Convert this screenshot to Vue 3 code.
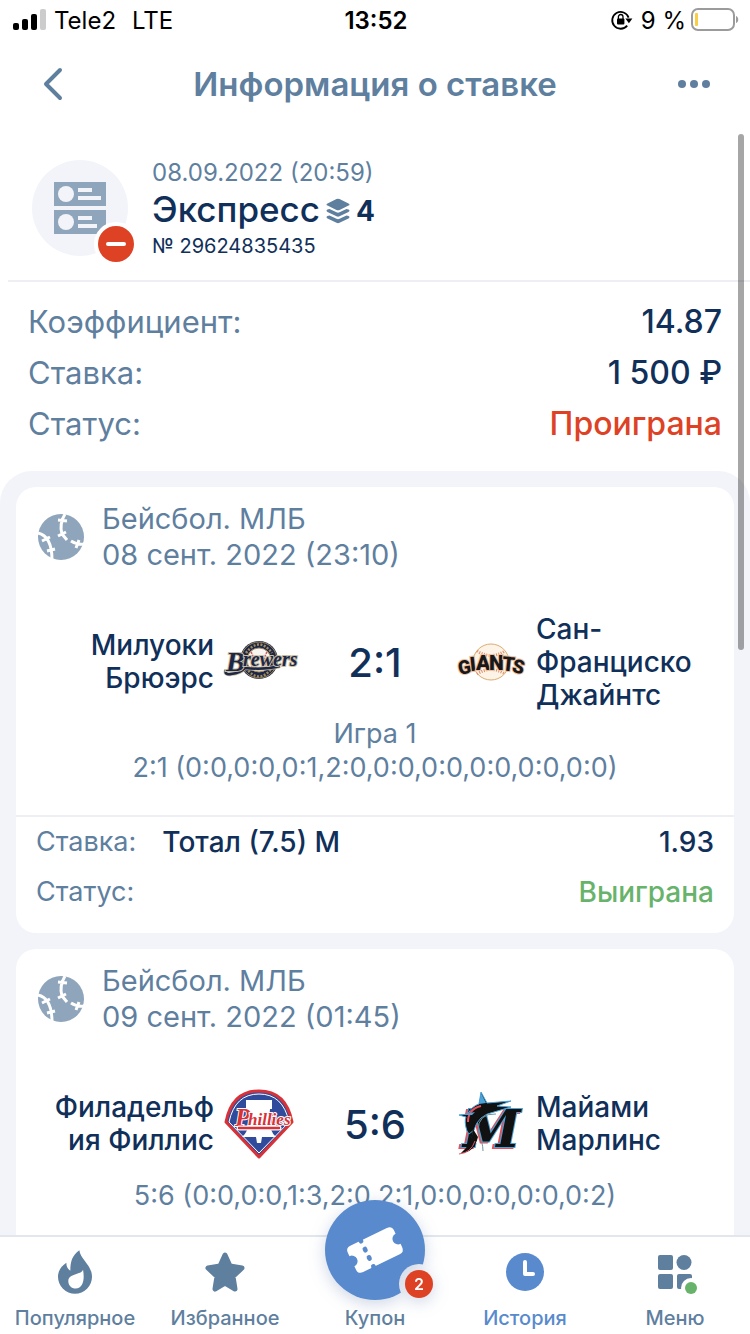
<template>
  <div class="app">
    <div class="status-bar">
      <div class="status-left">
        <svg width="33" height="22" viewBox="0 0 33 22" aria-hidden="true">
          <rect x="0" y="14" width="6" height="7" rx="2" />
          <rect x="9" y="10" width="6" height="11" rx="2" />
          <rect x="18" y="5" width="6" height="16" rx="2" />
          <rect x="27" y="0" width="6" height="21" rx="2" fill="#cccccc" />
        </svg>
        <span>Tele2</span>
        <span class="network">LTE</span>
      </div>
      <time class="clock">13:52</time>
      <div class="status-right">
        <svg width="22" height="20" viewBox="0 0 22 20" aria-hidden="true">
          <path d="M16.2 15.6A8.4 8.4 0 1 1 17.6 7.6" fill="none" stroke="#000" stroke-width="1.8" />
          <path d="M14.4 8.6h7l-3.5 4.6z" />
          <rect x="6" y="8.4" width="7.4" height="6" rx="1" />
          <path d="M7.4 9V6.8a2.3 2.3 0 0 1 4.6 0V9" fill="none" stroke="#000" stroke-width="1.3" />
        </svg>
        <span>9 %</span>
        <svg class="battery" width="48" height="24" viewBox="0 0 48 24" aria-hidden="true">
          <rect x="1" y="1" width="42" height="21" rx="6" fill="none" stroke="#9b9b9b" stroke-width="2" />
          <rect x="4" y="5" width="3" height="13" rx="1" fill="#f7ce46" />
          <path d="M45 8c3 1 3 6 0 7z" fill="#9b9b9b" />
        </svg>
      </div>
    </div>

    <header class="header">
      <button class="icon-btn back" type="button" aria-label="Назад">
        <svg width="20" height="34" viewBox="0 0 20 34">
          <path d="M17 3L3 17l14 14" fill="none" stroke="currentColor" stroke-width="4" stroke-linecap="round" stroke-linejoin="round" />
        </svg>
      </button>
      <h1>Информация о ставке</h1>
      <button class="icon-btn more" type="button" aria-label="Ещё">
        <svg width="32" height="8" viewBox="0 0 32 8" fill="currentColor">
          <circle cx="4" cy="4" r="4" />
          <circle cx="16" cy="4" r="4" />
          <circle cx="28" cy="4" r="4" />
        </svg>
      </button>
    </header>

    <main class="content">
      <section class="bet">
        <div class="bet-icon">
          <svg width="52" height="52" viewBox="0 0 52 52" aria-hidden="true">
            <path d="M0 0h52v24H0zM0 28h52v24H0z" fill="#8ea5bb" />
            <g fill="#f3f4f9">
              <circle cx="12" cy="12" r="8" />
              <circle cx="12" cy="40" r="8" />
              <rect x="24" y="6" width="14" height="4" />
              <rect x="24" y="14" width="23" height="4" />
              <rect x="24" y="34" width="14" height="4" />
              <rect x="24" y="42" width="19" height="4" />
            </g>
          </svg>
          <span class="lost-mark"></span>
        </div>
        <div>
          <div class="bet-date">08.09.2022 (20:59)</div>
          <div class="bet-type">
            <span>Экспресс</span>
            <svg class="layers" width="24" height="26" viewBox="0 0 24 26" fill="#5f7f9f" aria-hidden="true">
              <path d="M10.500 1q1.500-.7 3 0l9 4.400q2 1.100 0 2.200l-9 4.400q-1.500.7-3 0l-9-4.400q-2-1.100 0-2.200z" />
              <path d="M1.500 11.500l2-.5 7 3.300q1.500.7 3 0l7-3.300 2 .5q2 1.200 0 2.500l-9 4.300q-1.500.7-3 0l-9-4.300q-2-1.300 0-2.500z" />
              <path d="M1.500 18l2-.5 7 3.300q1.500.7 3 0l7-3.300 2 .5q2 1.200 0 2.500l-9 4.300q-1.500.7-3 0l-9-4.300q-2-1.300 0-2.500z" />
            </svg>
            <b>4</b>
          </div>
          <div class="bet-number">№ 29624835435</div>
        </div>
      </section>

      <dl class="summary">
        <div v-for="row in summary" :key="row.label">
          <dt>{{ row.label }}</dt>
          <dd :class="row.state">{{ row.value }}</dd>
        </div>
      </dl>

      <section class="events">
        <article v-for="event in events" :key="event.date" class="card">
          <div class="card-head">
            <svg width="46" height="46" viewBox="0 0 46 46" aria-hidden="true">
              <circle cx="23" cy="23" r="23" fill="#8ea5bb" />
              <g fill="none" stroke="#fff" stroke-width="3">
                <path d="M27 0Q21 10 24 20l5 6M20 6l9 1M20 22l8-4" />
                <path d="M0 19Q14 22 14 46M4 27l8-4M9 37l8-2" />
                <path d="M33 27q6 4 13 3M41 26l-3 8" />
              </g>
            </svg>
            <div>
              <div>{{ event.league }}</div>
              <div>{{ event.date }}</div>
            </div>
          </div>

          <div class="match">
            <div class="team home">{{ event.home }}</div>
            <svg v-if="event.logos === 'mil-sf'" class="logo" viewBox="0 0 70 70" aria-hidden="true">
              <circle cx="35" cy="33" r="19" fill="#1d2748" />
              <circle cx="35" cy="33" r="18" fill="none" stroke="#a28a5b" />
              <circle cx="35" cy="33" r="12" fill="#f7f4f2" stroke="#a28a5b" />
              <path d="M27 25q5 8 0 16M43 25q-5 8 0 16" fill="none" stroke="#c9605c" stroke-width="1.500" stroke-dasharray="2 1" />
              <path d="M22 26q13-17 26 0M22 41q13 17 26 0" fill="none" stroke="#a28a5b" stroke-width="2.500" stroke-dasharray="2 1.500" />
              <path d="M2 43q-2 5 5 4 10-1 14-6 20 2 35-2" fill="none" stroke="#c9bd9f" stroke-width="4" />
              <path d="M2 43q-2 5 5 4 10-1 14-6 20 2 35-2" fill="none" stroke="#1d2748" stroke-width="2.500" />
              <g class="brewers">
                <text x="2" y="44" font-size="28">B</text>
                <text x="19" y="39" font-size="20">rewers</text>
              </g>
            </svg>
            <svg v-else class="logo" viewBox="0 0 70 70" aria-hidden="true">
              <path d="M2 33Q8 2 35 2t33 31L35 68z" fill="#304b9b" stroke="#d93138" stroke-width="3" stroke-linejoin="round" />
              <path d="M5 33Q11 5 35 5t30 28L35 64z" fill="none" stroke="#fff" />
              <path d="M22 11h26v9h-2l-1 11q1 12 7 17H38l-1 6h-4l-1-6H18q7-6 7-17l-1-11h-2z" fill="#fff" />
              <g class="phillies">
                <text x="11" y="37" font-size="25">P</text>
                <text x="24" y="36" font-size="17">hillies</text>
              </g>
              <path d="M15 39h40" stroke="#fff" stroke-width="5" stroke-linecap="round" />
              <path d="M15 39h40" stroke="#d93138" stroke-width="2.500" stroke-linecap="round" />
            </svg>
            <div class="score">{{ event.score }}</div>
            <svg v-if="event.logos === 'mil-sf'" class="logo" viewBox="0 0 70 70" aria-hidden="true">
              <circle cx="35" cy="35" r="18" fill="#fdf3e6" stroke="#d9ae72" />
              <path d="M21 24q14 9 28 0M21 47q14-9 28 0" fill="none" stroke="#df8a6c" stroke-width="3" stroke-dasharray="1 1.500" />
              <g class="giants">
                <text x="2" y="47" font-size="19" transform="rotate(-12 8 40)">G</text>
                <text x="14" y="44" font-size="20" transform="rotate(-6 17 40)">I</text>
                <text x="20" y="43" font-size="21">A</text>
                <text x="33" y="43" font-size="21">N</text>
                <text x="46" y="44" font-size="20" transform="rotate(6 52 38)">T</text>
                <text x="57" y="46" font-size="19" transform="rotate(13 62 38)">S</text>
              </g>
            </svg>
            <svg v-else class="logo" viewBox="0 0 70 70" aria-hidden="true">
              <text class="marlins-red" x="5" y="59">M</text>
              <text class="marlins" x="7" y="58">M</text>
              <path d="M11 42Q8 33 10 28L3 26l9-1q4-8 11-10L25 3l6 11 24-2-14 5 14 1-17 5Q22 26 18 41l-5 4z" fill="#111" stroke="#4ba3d8" />
              <path d="M12 33Q12 20 25 17" fill="none" stroke="#e5515c" stroke-width="2" />
              <path d="M25 4l5 10-7 1zM4 26l15-3-3 3z" fill="#4ba3d8" />
              <path d="M17 40q-1 15-12 24 13 0 17-16" fill="#111" />
              <path d="M3 65q12-1 16-13" fill="none" stroke="#e5515c" />
              <path d="M40 25Q22 24 22 42q5 12 5 20" fill="none" stroke="#73929f" />
            </svg>
            <div class="team">{{ event.away }}</div>
          </div>

          <div class="periods">
            <div v-if="event.game">{{ event.game }}</div>
            <div>{{ event.periods }}</div>
          </div>

          <dl v-if="event.market" class="pick">
            <div>
              <dt>Ставка:</dt>
              <dd class="market">{{ event.market }}</dd>
              <dd>{{ event.odds }}</dd>
            </div>
            <div>
              <dt>Статус:</dt>
              <dd class="won">{{ event.status }}</dd>
            </div>
          </dl>
        </article>
      </section>
    </main>
    <div class="scrollbar"></div>

    <nav class="tabs">
      <a href="#popular" class="tab">
        <svg width="34" height="44" viewBox="177 181 102 131" fill="currentColor">
          <path fill-rule="evenodd" d="M241 181c3 28 38 44 38 80a51 51 0 0 1-102 0c0-18 10-32 25-42 0 12 4 19 12 24 0-28 5-46 27-62zM252 240c-4 15-44 10-44 34 0 13 10 22 22 22 24 0 27-30 22-56z" />
        </svg>
        <span>Популярное</span>
      </a>
      <a href="#favorites" class="tab">
        <svg width="40" height="44" viewBox="0 0 40 44" fill="currentColor">
          <path d="M20 5l5 11 12 2-9 8.500 2 12.500-10-6-10 6 2-12.500L3 18l12-2z" stroke="currentColor" stroke-width="5" stroke-linejoin="round" />
        </svg>
        <span>Избранное</span>
      </a>
      <a href="#coupon" class="tab">
        <span class="coupon">
          <svg width="100" height="100" viewBox="0 0 300 300" aria-hidden="true">
            <mask id="badge-cut">
              <rect width="300" height="300" fill="#fff" />
              <circle cx="282" cy="252" r="60" fill="#000" />
            </mask>
            <circle cx="150" cy="150" r="150" fill="#588acd" mask="url(#badge-cut)" />
            <g transform="translate(150 150) rotate(-26)">
              <path d="M-61-44H61q16 0 16 16v11a17 17 0 0 0 0 34v11q0 16-16 16H-61q-16 0-16-16V17a17 17 0 0 0 0-34v-11q0-16 16-16z" fill="#fff" />
              <path d="M-26-46v4M-26-16v4M-26 12v4M-26 42v4" stroke="#588acd" stroke-width="14" stroke-linecap="round" />
            </g>
          </svg>
          <span class="badge">2</span>
        </span>
        <span>Купон</span>
      </a>
      <a href="#history" class="tab active">
        <svg width="38" height="44" viewBox="0 0 38 44">
          <circle cx="19" cy="22" r="19" fill="currentColor" />
          <path d="M19 12v12h8" fill="none" stroke="#fff" stroke-width="4" stroke-linecap="round" stroke-linejoin="round" />
        </svg>
        <span>История</span>
      </a>
      <a href="#menu" class="tab">
        <svg width="40" height="44" viewBox="0 0 40 44" fill="currentColor">
          <rect x="3" y="5" width="15" height="15" rx="2" />
          <circle cx="29" cy="12.500" r="7.500" />
          <rect x="3" y="24" width="15" height="15" rx="2" />
          <rect x="22" y="24" width="15" height="15" rx="2" />
          <circle cx="36" cy="38" r="10" fill="#fff" />
          <circle cx="36" cy="38" r="6" fill="#68b36b" />
        </svg>
        <span>Меню</span>
      </a>
    </nav>
  </div>
</template>

<script setup>
import { ref } from "vue";

const summary = ref([
  { label: "Коэффициент:", value: "14.87" },
  { label: "Ставка:", value: "1 500 ₽" },
  { label: "Статус:", value: "Проиграна", state: "lost" },
]);

const events = ref([
  {
    league: "Бейсбол. МЛБ",
    date: "08 сент. 2022 (23:10)",
    home: "Милуоки Брюэрс",
    away: "Сан-Франциско Джайнтс",
    logos: "mil-sf",
    score: "2:1",
    game: "Игра 1",
    periods: "2:1 (0:0,0:0,0:1,2:0,0:0,0:0,0:0,0:0,0:0)",
    market: "Тотал (7.5) М",
    odds: "1.93",
    status: "Выиграна",
  },
  {
    league: "Бейсбол. МЛБ",
    date: "09 сент. 2022 (01:45)",
    home: "Филадельфия Филлис",
    away: "Майами Марлинс",
    logos: "phi-mia",
    score: "5:6",
    periods: "5:6 (0:0,0:0,1:3,2:0,2:1,0:0,0:0,0:0,0:2)",
  },
]);
</script>

<style>
body {
  margin: 0;
  overflow: hidden;
}
</style>

<style scoped>
.app {
  position: relative;
  display: flex;
  flex-direction: column;
  height: 100vh;
  background: #fff;
  color: #5f7f9f;
  font-family: Inter, "Liberation Sans", sans-serif;
}
svg {
  flex: none;
  display: block;
  overflow: visible;
}
dl,
dd,
h1 {
  margin: 0;
}
.status-bar {
  flex: none;
  display: grid;
  grid-template-columns: 1fr auto 1fr;
  align-items: center;
  height: 40px;
  padding: 0 11px 0 13px;
  color: #000;
  font-size: 24px;
}
.status-left,
.status-right {
  display: flex;
  align-items: center;
  gap: 8px;
}
.status-right {
  justify-content: flex-end;
}
.network {
  margin-left: 8px;
}
.battery {
  margin-left: -3px;
}
.clock {
  font-weight: 600;
}
.header {
  flex: none;
  display: flex;
  align-items: center;
  justify-content: space-between;
  height: 88px;
  padding: 0 32px;
}
.header h1 {
  font-size: 33px;
  font-weight: 600;
}
.icon-btn {
  display: flex;
  width: 44px;
  padding: 0 8px 0 11px;
  border: 0;
  background: none;
  color: inherit;
  cursor: pointer;
}
.icon-btn.more {
  justify-content: flex-end;
}
.content {
  flex: 1;
  min-height: 0;
  overflow: hidden;
}
.bet {
  display: flex;
  gap: 24px;
  margin-left: 8px;
  padding: 30px 24px 18px;
  border-bottom: 2px solid #eeeff4;
}
.bet-icon {
  position: relative;
  display: flex;
  align-items: center;
  justify-content: center;
  width: 96px;
  height: 96px;
  margin-top: 2px;
  border-radius: 50%;
  background: #f3f4f9;
}
.lost-mark {
  position: absolute;
  right: -10px;
  bottom: -10px;
  display: flex;
  align-items: center;
  justify-content: center;
  width: 36px;
  height: 36px;
  border: 4px solid #fff;
  border-radius: 50%;
  background: #de4225;
}
.lost-mark::before {
  content: "";
  width: 20px;
  height: 4px;
  border-radius: 2px;
  background: #fff;
}
.bet-date {
  font-size: 24px;
  line-height: 30px;
}
.bet-type {
  display: flex;
  align-items: center;
  gap: 6px;
  color: #10305a;
  font-size: 35px;
  font-weight: 500;
  line-height: 42px;
}
.layers {
  margin-top: 4px;
}
.layers path {
  stroke: #fff;
  stroke-width: 1px;
  paint-order: stroke;
}
.bet-type b {
  padding-top: 4px;
  font-size: 28px;
  font-weight: 700;
  line-height: 38px;
}
.bet-number {
  color: #10305a;
  font-size: 20px;
  line-height: 32px;
}
.summary {
  padding: 14px 28px 22px;
  font-size: 31px;
  line-height: 51px;
}
.summary div {
  display: flex;
  justify-content: space-between;
}
.summary dd {
  color: #10305a;
  font-size: 32px;
  font-weight: 500;
}
.summary .lost {
  color: #de4225;
}
.events {
  display: flex;
  flex-direction: column;
  gap: 16px;
  padding: 16px;
  border-radius: 32px 32px 0 0;
  background: #f3f4f9;
}
.card {
  border-radius: 20px;
  background: #fff;
}
.card-head {
  display: flex;
  align-items: center;
  gap: 18px;
  padding: 14px 22px 0;
  font-size: 29px;
  line-height: 36px;
}
.match {
  display: grid;
  grid-template-columns: minmax(0, 1fr) 70px 142px 70px minmax(0, 1fr);
  align-items: center;
  gap: 10px;
  min-height: 100px;
  padding: 39px 36px 5px;
}
.team {
  overflow-wrap: anywhere;
  color: #10305a;
  font-size: 28px;
  font-weight: 500;
  line-height: 33px;
}
.team.home {
  text-align: right;
}
.logo {
  width: 70px;
  height: 70px;
}
.score {
  color: #10305a;
  font-size: 40px;
  font-weight: 500;
  text-align: center;
}
.periods {
  padding-bottom: 30px;
  font-size: 27px;
  line-height: 34px;
  text-align: center;
}
.events .card:last-child {
  min-height: 446px;
}
.pick {
  padding: 0 20px 16px;
  border-top: 2px solid #eeeff4;
  font-size: 27px;
  line-height: 50px;
}
.pick div {
  display: flex;
}
.pick dd {
  margin-left: auto;
  color: #10305a;
  font-size: 28px;
  font-weight: 500;
}
.pick .market {
  margin-left: 26px;
}
.pick .won {
  color: #68b36b;
}
.brewers {
  font-family: "Liberation Serif", serif;
  font-style: italic;
  font-weight: 700;
  fill: #1d2748;
  stroke: #c9bd9f;
  stroke-width: 2px;
  paint-order: stroke;
}
.giants {
  font-family: Roboto, sans-serif;
  font-weight: 900;
  fill: #17181c;
  stroke: #f0c09c;
  stroke-width: 2px;
  paint-order: stroke;
}
.phillies {
  font-family: "Liberation Serif", serif;
  font-style: italic;
  font-weight: 700;
  fill: #d93138;
  stroke: #fff;
  stroke-width: 2px;
  paint-order: stroke;
}
.marlins,
.marlins-red {
  font-family: "DejaVu Serif", serif;
  font-size: 52px;
  font-style: italic;
  font-weight: 700;
  fill: #111;
  stroke: #4ba3d8;
  stroke-width: 2px;
  paint-order: stroke;
}
.marlins-red {
  fill: #e5515c;
  stroke: #e5515c;
}
.scrollbar {
  position: absolute;
  top: 134px;
  right: 6px;
  width: 6px;
  height: 516px;
  border-radius: 3px;
  background: rgba(0, 0, 0, 0.35);
}
.tabs {
  flex: none;
  display: grid;
  grid-template-columns: repeat(5, minmax(0, 1fr));
  height: 97px;
  border-top: 2px solid #e2e7ee;
  background: #fff;
}
.tab {
  position: relative;
  display: flex;
  flex-direction: column;
  align-items: center;
  justify-content: space-between;
  padding: 13px 0 4px;
  color: #5f7f9f;
  font-size: 20px;
  font-weight: 500;
  line-height: 24px;
  text-decoration: none;
}
.tab.active {
  color: #588acd;
}
.coupon {
  position: absolute;
  top: -37px;
  width: 100px;
  height: 100px;
  filter: drop-shadow(0 4px 8px rgba(60, 90, 150, 0.25));
}
.coupon + span {
  margin-top: auto;
}
.badge {
  position: absolute;
  right: -8px;
  bottom: 2px;
  width: 28px;
  border-radius: 50%;
  background: #de4225;
  color: #fff;
  font-size: 16px;
  font-weight: 600;
  line-height: 28px;
  text-align: center;
}
</style>
